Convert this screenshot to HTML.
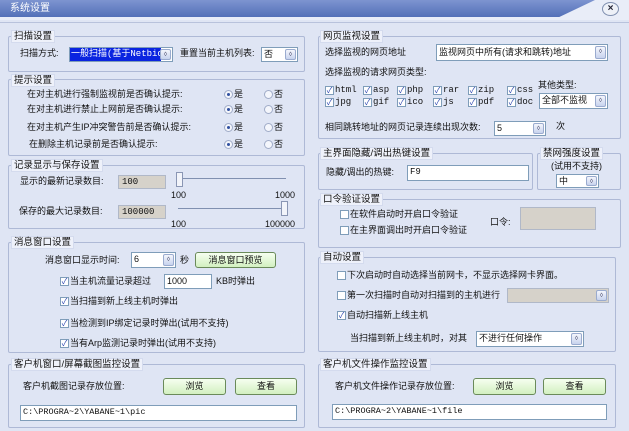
<!DOCTYPE html>
<html><head><meta charset="utf-8"><style>
*{margin:0;padding:0;box-sizing:border-box}
body{width:629px;height:431px;overflow:hidden;background:#dfe5f4;font-family:"Liberation Sans","Noto Sans CJK SC",sans-serif;font-size:9px;color:#111;position:relative}
div,span{position:absolute}
.t{white-space:nowrap;line-height:11px}
.m{font-family:"Liberation Mono","Noto Sans CJK SC",monospace}
.g{border:1px solid #aeb9d6;border-radius:2px}
.gl{background:#eef1fa;padding:0 2px;line-height:11px;white-space:nowrap;border:1px solid #d4dbee;font-size:9.5px}
.in{background:#fff;border:1px solid #7f9db9;line-height:12px;padding-left:2px;white-space:nowrap;overflow:hidden}
.gr{background:#d6d2ca;border:1px solid #b0b8c8;line-height:12px;padding-left:3px}
.dd{width:11px;top:1px;right:1px;bottom:1px;background:linear-gradient(#f4f6fc,#c8d3ee);border:1px solid #9aabcf;border-radius:2px;font-size:6px;text-align:center;line-height:10px;color:#335}
.cb{width:9px;height:9px;background:#fff;border:1px solid #7f9db9;font-size:8px;line-height:7px;text-align:center;color:#2a45b0}
.rb{width:9px;height:9px;border-radius:50%;background:#f4f6fc;border:1px solid #a0acc8}
.rb.on::after{content:"";position:absolute;left:2px;top:2px;width:3px;height:3px;border-radius:50%;background:#3050a0}
.bt{background:linear-gradient(#f6fff0,#d2f0c0);border:1px solid #6a8a5a;border-radius:3px;text-align:center;line-height:14px}
</style></head><body>
<div style="left:0;top:0;width:629px;height:20px;background:#e9edf8"></div>
<div style="left:0;top:0;width:595px;height:17px;background:linear-gradient(#7d94d0,#5370b8);clip-path:polygon(0 0,100% 0,94% 100%,0 100%)"></div>
<div class="t" style="left:10px;top:3px;color:#fff;font-size:10px">系统设置</div>
<div style="left:602px;top:2px;width:17px;height:14px;border:1px solid #8090b0;border-radius:50%;background:#eef1f8;text-align:center;font-size:10px;line-height:12px;font-weight:bold;color:#223">×</div>
<div style="left:0;top:22px;width:629px;height:1px;background:#b8c2dc"></div>

<div class="g" style="left:8px;top:36px;width:297px;height:36px"></div>
<div class="gl" style="left:11px;top:30px">扫描设置</div>
<div class="t" style="left:20px;top:48px">扫描方式:</div>
<div class="in" style="left:69px;top:47px;width:104px;height:15px;background:#fff"><span class="m" style="left:0;top:0;width:91px;height:13px;background:#0a24e0;color:#fff;padding-left:1px">一般扫描(基于Netbio</span><div class="dd">◊</div></div>
<div class="t" style="left:180px;top:48px">重置当前主机列表:</div>
<div class="in" style="left:261px;top:47px;width:37px;height:15px">否<div class="dd">◊</div></div>

<div class="g" style="left:8px;top:79px;width:297px;height:77px"></div>
<div class="gl" style="left:11px;top:74px">提示设置</div>
<div class="t" style="left:27px;top:89px">在对主机进行强制监视前是否确认提示:</div>
<div class="t" style="left:27px;top:104px">在对主机进行禁止上网前是否确认提示:</div>
<div class="t" style="left:27px;top:122px">在对主机产生IP冲突警告前是否确认提示:</div>
<div class="t" style="left:29px;top:139px">在删除主机记录前是否确认提示:</div>
<div class="rb on" style="left:224px;top:90px"></div><div class="t" style="left:234px;top:89px">是</div>
<div class="rb" style="left:264px;top:90px"></div><div class="t" style="left:274px;top:89px">否</div>
<div class="rb on" style="left:224px;top:105px"></div><div class="t" style="left:234px;top:104px">是</div>
<div class="rb" style="left:264px;top:105px"></div><div class="t" style="left:274px;top:104px">否</div>
<div class="rb on" style="left:224px;top:123px"></div><div class="t" style="left:234px;top:122px">是</div>
<div class="rb" style="left:264px;top:123px"></div><div class="t" style="left:274px;top:122px">否</div>
<div class="rb on" style="left:224px;top:140px"></div><div class="t" style="left:234px;top:139px">是</div>
<div class="rb" style="left:264px;top:140px"></div><div class="t" style="left:274px;top:139px">否</div>

<div class="g" style="left:8px;top:165px;width:297px;height:64px"></div>
<div class="gl" style="left:11px;top:159px">记录显示与保存设置</div>
<div class="t" style="left:20px;top:176px">显示的最新记录数目:</div>
<div class="gr m" style="left:118px;top:175px;width:48px;height:14px">100</div>
<div style="left:180px;top:178px;width:106px;height:1px;background:#8090b0"></div>
<div style="left:176px;top:172px;width:7px;height:15px;background:#f2f4fa;border:1px solid #8a96b4"></div>
<div class="t" style="left:171px;top:190px">100</div><div class="t" style="left:275px;top:190px">1000</div>
<div class="t" style="left:19px;top:206px">保存的最大记录数目:</div>
<div class="gr m" style="left:118px;top:205px;width:48px;height:14px">100000</div>
<div style="left:178px;top:208px;width:106px;height:1px;background:#8090b0"></div>
<div style="left:281px;top:201px;width:7px;height:15px;background:#f2f4fa;border:1px solid #8a96b4"></div>
<div class="t" style="left:171px;top:219px">100</div><div class="t" style="left:265px;top:219px">100000</div>

<div class="g" style="left:8px;top:242px;width:297px;height:111px"></div>
<div class="gl" style="left:11px;top:236px">消息窗口设置</div>
<div class="t" style="left:45px;top:255px">消息窗口显示时间:</div>
<div class="in" style="left:131px;top:252px;width:45px;height:16px">6<div class="dd">◊</div></div>
<div class="t" style="left:180px;top:255px">秒</div>
<div class="bt" style="left:195px;top:252px;width:81px;height:16px">消息窗口预览</div>
<div class="cb" style="left:60px;top:277px">✓</div><div class="t" style="left:70px;top:276px">当主机流量记录超过</div>
<div class="in" style="left:164px;top:274px;width:48px;height:15px">1000</div>
<div class="t" style="left:216px;top:276px">KB时弹出</div>
<div class="cb" style="left:60px;top:297px">✓</div><div class="t" style="left:70px;top:296px">当扫描到新上线主机时弹出</div>
<div class="cb" style="left:60px;top:319px">✓</div><div class="t" style="left:70px;top:318px">当检测到IP绑定记录时弹出(试用不支持)</div>
<div class="cb" style="left:60px;top:339px">✓</div><div class="t" style="left:70px;top:338px">当有Arp监测记录时弹出(试用不支持)</div>

<div class="g" style="left:8px;top:364px;width:297px;height:64px"></div>
<div class="gl" style="left:11px;top:358px">客户机窗口/屏幕截图监控设置</div>
<div class="t" style="left:23px;top:381px">客户机截图记录存放位置:</div>
<div class="bt" style="left:163px;top:378px;width:63px;height:17px;line-height:15px">浏览</div>
<div class="bt" style="left:235px;top:378px;width:62px;height:17px;line-height:15px">查看</div>
<div class="in m" style="left:20px;top:405px;width:277px;height:16px;font-size:8.5px">C:\PROGRA~2\YABANE~1\pic</div>

<div class="g" style="left:318px;top:36px;width:303px;height:103px"></div>
<div class="gl" style="left:320px;top:30px">网页监视设置</div>
<div class="t" style="left:325px;top:47px">选择监视的网页地址</div>
<div class="in" style="left:436px;top:44px;width:172px;height:17px;line-height:14px">监视网页中所有(请求和跳转)地址<div class="dd">◊</div></div>
<div class="t" style="left:325px;top:67px">选择监视的请求网页类型:</div>
<div class="cb" style="left:325px;top:86px">✓</div><div class="t m" style="left:335px;top:85px">html</div>
<div class="cb" style="left:363px;top:86px">✓</div><div class="t m" style="left:373px;top:85px">asp</div>
<div class="cb" style="left:397px;top:86px">✓</div><div class="t m" style="left:407px;top:85px">php</div>
<div class="cb" style="left:433px;top:86px">✓</div><div class="t m" style="left:443px;top:85px">rar</div>
<div class="cb" style="left:468px;top:86px">✓</div><div class="t m" style="left:478px;top:85px">zip</div>
<div class="cb" style="left:507px;top:86px">✓</div><div class="t m" style="left:517px;top:85px">css</div>
<div class="cb" style="left:325px;top:98px">✓</div><div class="t m" style="left:335px;top:97px">jpg</div>
<div class="cb" style="left:363px;top:98px">✓</div><div class="t m" style="left:373px;top:97px">gif</div>
<div class="cb" style="left:397px;top:98px">✓</div><div class="t m" style="left:407px;top:97px">ico</div>
<div class="cb" style="left:433px;top:98px">✓</div><div class="t m" style="left:443px;top:97px">js</div>
<div class="cb" style="left:468px;top:98px">✓</div><div class="t m" style="left:478px;top:97px">pdf</div>
<div class="cb" style="left:507px;top:98px">✓</div><div class="t m" style="left:517px;top:97px">doc</div>
<div class="t" style="left:538px;top:80px">其他类型:</div>
<div class="in" style="left:539px;top:93px;width:69px;height:16px">全部不监视<div class="dd">◊</div></div>
<div class="t" style="left:325px;top:122px">相同跳转地址的网页记录连续出现次数:</div>
<div class="in" style="left:494px;top:121px;width:52px;height:15px">5<div class="dd">◊</div></div>
<div class="t" style="left:556px;top:121px">次</div>

<div class="g" style="left:318px;top:153px;width:215px;height:37px"></div>
<div class="gl" style="left:320px;top:147px">主界面隐藏/调出热键设置</div>
<div class="t" style="left:326px;top:167px">隐藏/调出的热键:</div>
<div class="in m" style="left:407px;top:165px;width:122px;height:16px">F9</div>
<div class="g" style="left:537px;top:153px;width:84px;height:37px"></div>
<div class="gl" style="left:540px;top:147px">禁网强度设置</div>
<div class="t" style="left:551px;top:161px">(试用不支持)</div>
<div class="in" style="left:556px;top:174px;width:43px;height:14px">中<div class="dd">◊</div></div>

<div class="g" style="left:318px;top:199px;width:303px;height:49px"></div>
<div class="gl" style="left:320px;top:193px">口令验证设置</div>
<div class="cb" style="left:340px;top:210px"></div><div class="t" style="left:350px;top:209px">在软件启动时开启口令验证</div>
<div class="cb" style="left:340px;top:226px"></div><div class="t" style="left:350px;top:225px">在主界面调出时开启口令验证</div>
<div class="t" style="left:490px;top:217px">口令:</div>
<div class="gr" style="left:520px;top:207px;width:76px;height:23px"></div>

<div class="g" style="left:318px;top:257px;width:298px;height:95px"></div>
<div class="gl" style="left:320px;top:251px">自动设置</div>
<div class="cb" style="left:337px;top:271px"></div><div class="t" style="left:347px;top:270px">下次启动时自动选择当前网卡，不显示选择网卡界面。</div>
<div class="cb" style="left:337px;top:291px"></div><div class="t" style="left:347px;top:290px">第一次扫描时自动对扫描到的主机进行</div>
<div class="gr" style="left:507px;top:288px;width:102px;height:15px;padding:0"><div class="dd">◊</div></div>
<div class="cb" style="left:337px;top:311px">✓</div><div class="t" style="left:347px;top:310px">自动扫描新上线主机</div>
<div class="t" style="left:350px;top:333px">当扫描到新上线主机时，对其</div>
<div class="in" style="left:476px;top:331px;width:108px;height:16px">不进行任何操作<div class="dd">◊</div></div>

<div class="g" style="left:318px;top:364px;width:298px;height:64px"></div>
<div class="gl" style="left:320px;top:358px">客户机文件操作监控设置</div>
<div class="t" style="left:335px;top:381px">客户机文件操作记录存放位置:</div>
<div class="bt" style="left:473px;top:378px;width:63px;height:17px;line-height:15px">浏览</div>
<div class="bt" style="left:543px;top:378px;width:63px;height:17px;line-height:15px">查看</div>
<div class="in m" style="left:332px;top:404px;width:275px;height:16px;font-size:8.5px">C:\PROGRA~2\YABANE~1\file</div>
</body></html>
